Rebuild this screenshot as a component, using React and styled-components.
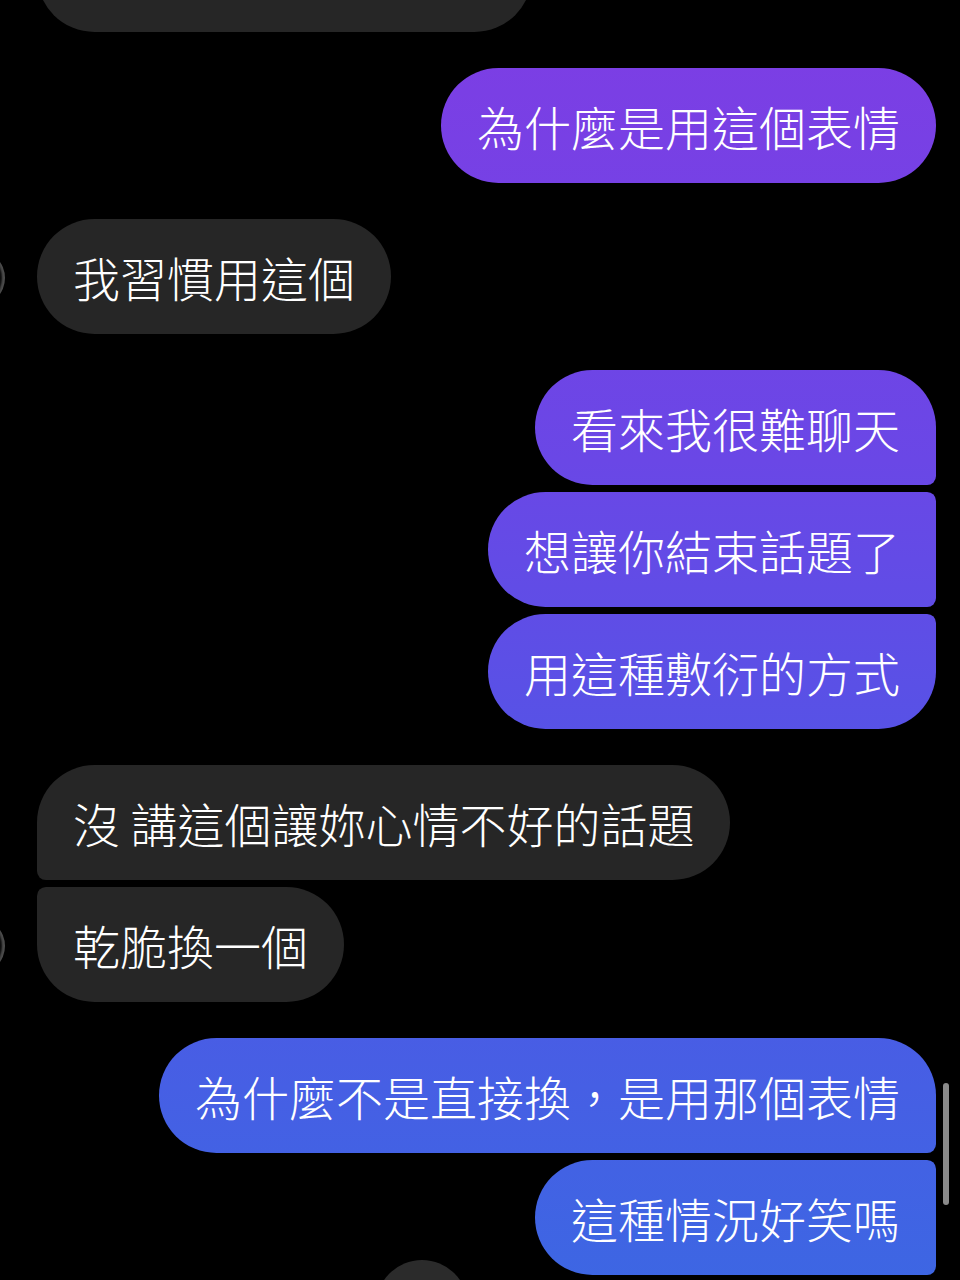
import React from "react"
import styled, { createGlobalStyle, css } from "styled-components"

const GlobalStyle = createGlobalStyle`
  html, body {
    margin: 0;
    padding: 0;
    background: #000;
    overflow: hidden;
  }
  body {
    font-family: "Noto Sans CJK TC", "Noto Sans", sans-serif;
  }
`

const messages = [
    { side: "them", text: "這個表情比較可愛啦", pos: "last" },
    { side: "me", text: "為什麼是用這個表情", pos: "single" },
    { side: "them", text: "我習慣用這個", pos: "single", avatar: true },
    { side: "me", text: "看來我很難聊天", pos: "first" },
    { side: "me", text: "想讓你結束話題了", pos: "middle" },
    { side: "me", text: "用這種敷衍的方式", pos: "last" },
    { side: "them", text: "沒 講這個讓妳心情不好的話題", pos: "first" },
    { side: "them", text: "乾脆換一個", pos: "last", avatar: true },
    { side: "me", text: "為什麼不是直接換，是用那個表情", pos: "first" },
    { side: "me", text: "這種情況好笑嗎", pos: "middle" },
    { side: "me", text: "我真的不太懂你耶", pos: "middle", seen: true },
]

function Chat() {
    return (
        <Thread>
            {messages.map((m, i) => {
                const prev = messages[i - 1]
                const grouped = prev && prev.side === m.side && m.pos !== "first" && m.pos !== "single"
                return (
                    <Row key={i} side={m.side} grouped={grouped}>
                        {m.avatar && <Avatar />}
                        {m.seen && <Reaction />}
                        <Bubble side={m.side} pos={m.pos}>{m.text}</Bubble>
                    </Row>
                )
            })}
        </Thread>
    )
}

export default function App() {
    return (
        <>
            <GlobalStyle />
            <Screen>
                <Chat />
                <ScrollThumb />
            </Screen>
        </>
    )
}

const Screen = styled.div`
   position: relative;
   width: 960px;
   height: 1280px;
   overflow: hidden;
   background: #000;
`

const Thread = styled.div`
   display: flex;
   flex-direction: column;
   margin-top: -83px;
   padding: 0 24px 0 37px;
`

const Row = styled.div`
   position: relative;
   display: flex;
   align-items: flex-start;
   justify-content: ${p => (p.side === "me" ? "flex-end" : "flex-start")};
   gap: 20px;
   margin-top: ${p => (p.grouped ? "7px" : "36px")};

   &:first-child {
      margin-top: 0;
   }
`

const big = "58px"
const small = "9px"

const radius = (side, pos) => {
    const top = pos === "first" || pos === "single" ? big : small
    const bottom = pos === "last" || pos === "single" ? big : small
    if (side === "me") return `${big} ${top} ${bottom} ${big}`
    return `${top} ${big} ${big} ${bottom}`
}

const Bubble = styled.div`
   box-sizing: border-box;
   height: 115px;
   line-height: 115px;
   padding: 0 36px;
   font-size: 47px;
   font-weight: 300;
   color: #fff;
   white-space: nowrap;
   border-radius: ${p => radius(p.side, p.pos)};
   ${p => p.side === "me"
        ? css`
            background: linear-gradient(180deg, #7e3de4 0px, #6a47e6 460px, #5553e6 760px, #3d66e3 1280px);
            background-attachment: fixed;
        `
        : css`
            background: #262626;
        `}
`

const Avatar = styled.div`
   position: absolute;
   left: -88px;
   bottom: 28px;
   width: 56px;
   height: 56px;
   border-radius: 50%;
   background: #0a0a0a;
   box-shadow: inset -3px 0 2px rgba(200, 200, 200, 0.35);
`

const Reaction = styled.div`
   width: 92px;
   height: 92px;
   margin-top: -22px;
   border-radius: 50%;
   background: #2b2b2b;
`

const ScrollThumb = styled.div`
   position: absolute;
   right: 11px;
   top: 1083px;
   width: 6px;
   height: 122px;
   border-radius: 3px;
   background: #8a8a8a;
`
